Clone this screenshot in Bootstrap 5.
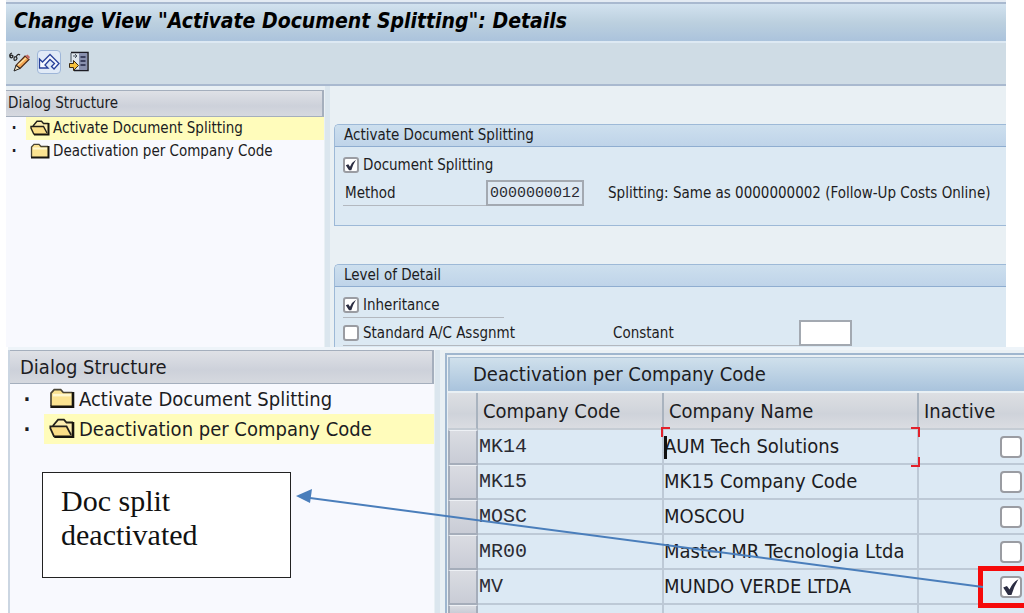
<!DOCTYPE html>
<html lang="en">
<head>
<meta charset="utf-8">
<meta name="viewport" content="width=device-width, initial-scale=1">
<title>Activate Document Splitting</title>
<link href="https://cdn.jsdelivr.net/npm/bootstrap@5.3.0/dist/css/bootstrap.min.css" rel="stylesheet">
<style>
  body { background: #fff; color: #1c1c22; font-family: "DejaVu Sans Condensed", "DejaVu Sans", sans-serif; font-size: 15px; line-height: 22px; }
  .screen-top { margin: 0 18px 0 6px; background: #e9f0f4; border-top: 2px solid #e4ebf3; }
  .title-bar { border-top: 2px solid #a9b9cf; border-bottom: 2px solid #dde9f3; background: linear-gradient(#d2e2ef, #bcd0df 50%, #abc3dc); padding: 0 8px; height: 41px; }
  .title-bar h1 { font-size: 21px; line-height: 34px; font-weight: 700; font-style: italic; color: #000; margin: 0; }
  .tool-bar { background: #cfdce5; border-bottom: 2px solid #a9b9cf; height: 43px; gap: 6px; padding: 0 0 4px 1px; }
  .tool-bar button { width: 24px; height: 24px; padding: 0; border: 1px solid transparent; border-radius: 4px; background: none; display: flex; align-items: center; justify-content: center; }
  .tool-bar button.picked { background: #e0eaf7; border-color: #9eb6d8; }
  .pane-tree { width: 318px; background: #f8f9fe; flex: none; border-top: 4px solid #e9f0f4; }
  .splitter { width: 5px; background: #dbe6ee; flex: none; margin-left: 1px; }
  .tree-head { border: 1px solid #a5afbd; border-right-width: 2px; border-left: 0; background: linear-gradient(#dfe1e6, #cdd1da 60%, #d6d9df); line-height: 25px; padding-left: 2px; margin: 0; font-size: 15px; font-weight: 400; }
  .tree-row { line-height: 23px; }
  .tree-row .dot { width: 20px; text-align: center; flex: none; padding-right: 4px; font-weight: 700; }
  .tree-row a { color: inherit; text-decoration: none; flex: 1; display: flex; align-items: center; gap: 3px; padding-left: 4px; white-space: nowrap; }
  .tree-row a.current { background: #fffcbb; }
  .details { padding: 38px 0 0 4px; min-width: 0; }
  .group-box { border: 1px solid #9db9d7; border-right: 0; border-top-left-radius: 5px; background: #dce9f3; }
  .group-box > h2 { font-size: 15px; font-weight: 400; line-height: 21px; margin: 0; padding-left: 9px; border-bottom: 1px solid #8fadd0; background: linear-gradient(#cddfee, #bfd4e9); border-top-left-radius: 4px; }
  .group-body { padding: 4px 0 0 8px; }
  .group-body.tall { padding-bottom: 18px; }
  .group-box + .group-box { margin-top: 38px; border-bottom: 0; }
  .field-row { height: 28px; white-space: nowrap; }
  .field-line { border-bottom: 1px solid #b3b8bf; height: 26px; line-height: 26px; }
  .w-method { width: 143px; padding-left: 2px; }
  .w-check { width: 161px; }
  .w-assign { width: 270px; }
  .w-const { width: 186px; }
  .tick { appearance: none; flex: none; width: 16px; height: 16px; margin: 0; border: 2px solid #9a9ca2; border-radius: 3px; background: #fff center / 100% no-repeat; }
  .tick:checked { background-image: url("data:image/svg+xml,%3Csvg xmlns='http://www.w3.org/2000/svg' viewBox='0 0 12 12'%3E%3Cpath d='M0.800 6.300 3.300 5.300 5 7.700Q7 3 11 0.800 8 5.500 6.300 11.300H4Z' fill='%232b2d42'/%3E%3C/svg%3E"); }
  .tick.big { width: 22px; height: 22px; border-radius: 4px; }
  .method-input { width: 98px; height: 26px; border: 2px solid #a3a9b1; background: #dde8f2; font: 15px "Liberation Mono", monospace; color: #2b2b33; padding: 0 2px; }
  .const-input { width: 53px; height: 26px; border: 2px solid #a3a9b1; background: #fff; }
  .screen-low { background: #e9f0f4; margin-left: 8px; font-size: 20px; border-top: 3px solid #eef4f9; }
  .low-tree { width: 426px; flex: none; background: #f8f9fe; border-left: 2px solid #cbd6e2; }
  .low-tree .tree-head { font-size: 20px; line-height: 32px; padding-left: 10px; }
  .low-tree .tree-row { line-height: 30px; }
  .low-tree .tree-row a { padding-left: 5px; gap: 4px; }
  .low-tree .tree-row .dot { width: 34px; padding-right: 0; }
  .note-box { width: 249px; height: 106px; margin: 28px 0 0 32px; padding: 11px 18px; border: 1px solid #222; background: #fff; font: 30px/34px "Liberation Serif", serif; color: #111; }
  .table-frame { border: 2px solid #9fb6ce; border-right: 0; border-bottom: 0; margin: 3px 0 0 5px; padding: 2px 0 0 1px; overflow: hidden; flex: 1; min-width: 0; }
  .table-frame h2 { font-size: 20px; font-weight: 400; line-height: 33px; margin: 0 0 2px; padding-left: 23px; border: 1px solid #a9bfd3; border-width: 1px 0 0 2px; background: linear-gradient(#cfe0ec, #a9c3dc); }
  .codes { width: 100%; table-layout: fixed; border-collapse: separate; border-spacing: 0; white-space: nowrap; }
  .codes th { font-weight: 400; height: 37px; padding: 0 0 0 5px; background: linear-gradient(#dddfe3, #cfd3da 60%, #dadce1); border-right: 2px solid #a9b3bf; border-bottom: 2px solid #c5ccd4; }
  .codes td { height: 35px; padding: 0; background: #dce9f4; border-right: 2px solid #bdc9d6; border-bottom: 2px solid #bdc9d6; position: relative; }
  .codes th:last-child, .codes td:last-child { border-right: 0; }
  .codes td:first-child { background: linear-gradient(#dadce2, #c9ccd6); border: 2px solid #a5adba; border-top: 1px solid #eef1f5; }
  .codes td:last-child { padding-left: 81px; }
  .codes td .tick { display: block; }
  .codes td.code { font: 20px/33px "Liberation Mono", monospace; color: #2b2b33; padding-left: 1px; }
  .codes td.name { line-height: 33px; }
  .codes td.focused { z-index: 1; }
  .codes tr.rest td { height: 8px; border-bottom: 0; }
  .edge { position: absolute; width: 9px; height: 10px; border: 0 solid #e3212b; }
  .edge.tl { left: -3px; top: -3px; border-width: 2px 0 0 2px; }
  .edge.tr { right: -3px; top: -3px; border-width: 2px 2px 0 0; }
  .edge.br { right: -3px; bottom: -4px; border-width: 0 2px 2px 0; }
  .caret { position: absolute; left: 0; top: 6px; width: 3px; height: 23px; background: #111; }
  .red-frame { position: absolute; left: 59px; right: -6px; top: -4px; bottom: -5px; border: 5px solid #f60a0a; pointer-events: none; }
  .codes td.flagged { z-index: 1; }
  .arrow-line { position: absolute; left: 302px; top: 147px; height: 91px; width: calc(100% - 343px); pointer-events: none; z-index: 2; }
  .arrow-tip { position: absolute; left: 288px; top: 139px; pointer-events: none; }
</style>
</head>
<body>
<svg class="d-none" aria-hidden="true">
  <symbol id="folder-closed" viewBox="0 0 20 17"><path d="M1.500 14.500V4L4 1.300h5L11 3.500h7.500v11z" fill="#fbe391"/><path d="M3 5.500h14" stroke="#fff8cf" stroke-width="2"/><path d="M1.500 14V4L4 1.300h5L11 3.500h7" fill="none" stroke="#4a4536" stroke-width="1.300"/><path d="M18.500 3v11.500H1" fill="none" stroke="#17150f" stroke-width="2"/></symbol>
  <symbol id="folder-open" viewBox="0 0 20 17"><path d="M4.500 6L7 1.300h4.500L13.500 3.500h5v11H5z" fill="#fdeeb0"/><path d="M1 6.500h12.500l3.500 8H4z" fill="#fbdf88"/><path d="M3 6L7 1.300h4.500L13.500 3.500h5M4 14.500L1 8V6.500h12.500l3.500 6.500" fill="none" stroke="#23201a" stroke-width="1.400"/><path d="M18.500 3v11.500H4" fill="none" stroke="#17150f" stroke-width="2"/></symbol>
</svg>

<main class="overflow-hidden">
<section class="screen-top">
  <header class="title-bar d-flex align-items-start"><h1>Change View "Activate Document Splitting": Details</h1></header>
  <div class="tool-bar d-flex align-items-center" role="toolbar">
    <button type="button" aria-label="Display or change">
      <svg width="22" height="22" viewBox="0 0 22 22"><path d="M4 2Q1 3 2 6q2 2 3-1Q3 3 2 6M6 8q0-3 2-2t0 3q-2 1-2-1M8 6q2-4 4-2" fill="none" stroke="#222" stroke-width="1.200"/><path d="M17 5l4 3.500-9 9-4-3z" fill="#f3a552" stroke="#4a2a18" stroke-width="1.200"/><path d="M8 14.500l4 3-6 2.500z" fill="#f6e3c0" stroke="#222"/><path d="M17.500 5l2-1.500L22 6l-1.500 2.500z" fill="#c46a62"/><path d="M10 14l8-7" stroke="#fde1a0" stroke-width="1.500"/></svg>
    </button>
    <button type="button" class="picked" aria-label="Undo">
      <svg width="22" height="20" viewBox="0 0 22 20"><path d="M1.500 7v9h8.500l-3-3L12 7.500l4.500 4-3 3 2.500 2.500 5-5.500L12 2.500 4.500 10z" fill="#f5f8ff" stroke="#27409a" stroke-width="1.300"/></svg>
    </button>
    <button type="button" aria-label="Select block">
      <svg width="22" height="22" viewBox="0 0 22 22"><path d="M3 1.500h17v18H6" fill="#dfe7ee" stroke="#1c1c24" stroke-width="1.500"/><path d="M11 2h8v17h-8z" fill="#8890ae"/><path d="M12.500 6h5M12.500 10h5M12.500 14h5" stroke="#202544" stroke-width="1.500"/><path d="M3 2v9M5 5h4M7 3l2 2-2 2" stroke="#48525e" fill="none"/><path d="M1.500 12.500h4v-3l5 5-5 5v-3h-4z" fill="#f8c23c" stroke="#3c2a10"/></svg>
    </button>
  </div>
  <div class="d-flex">
    <nav class="pane-tree">
      <h2 class="tree-head">Dialog Structure</h2>
      <div class="tree-row d-flex"><span class="dot">·</span><a class="current" href="#activate"><svg width="20" height="17"><use href="#folder-open"/></svg>Activate Document Splitting</a></div>
      <div class="tree-row d-flex"><span class="dot">·</span><a href="#deactivation"><svg width="20" height="17"><use href="#folder-closed"/></svg>Deactivation per Company Code</a></div>
    </nav>
    <div class="splitter"></div>
    <div class="details flex-grow-1">
      <section class="group-box" id="activate">
        <h2>Activate Document Splitting</h2>
        <div class="group-body tall">
          <div class="field-row d-flex align-items-center">
            <label class="d-flex align-items-center gap-1"><input class="tick" type="checkbox" checked>Document Splitting</label>
          </div>
          <div class="field-row d-flex align-items-center">
            <label class="field-line w-method" for="method">Method</label>
            <input id="method" class="method-input" type="text" value="0000000012" readonly>
            <span class="ps-4">Splitting: Same as 0000000002 (Follow-Up Costs Online)</span>
          </div>
        </div>
      </section>
      <section class="group-box" id="detail">
        <h2>Level of Detail</h2>
        <div class="group-body">
          <div class="field-row d-flex align-items-center">
            <label class="field-line w-check d-flex align-items-center gap-1"><input class="tick" type="checkbox" checked>Inheritance</label>
          </div>
          <div class="field-row d-flex align-items-center">
            <label class="field-line w-assign d-flex align-items-center gap-1"><input class="tick" type="checkbox">Standard A/C Assgnmt</label>
            <label class="field-line w-const" for="constant">Constant</label>
            <input id="constant" class="const-input" type="text">
          </div>
        </div>
      </section>
    </div>
  </div>
</section>

<section class="screen-low position-relative d-flex">
  <nav class="low-tree">
    <h2 class="tree-head">Dialog Structure</h2>
    <div class="tree-row d-flex"><span class="dot">·</span><a href="#activate"><svg width="26" height="22"><use href="#folder-closed"/></svg>Activate Document Splitting</a></div>
    <div class="tree-row d-flex"><span class="dot">·</span><a class="current" href="#deactivation"><svg width="26" height="22"><use href="#folder-open"/></svg>Deactivation per Company Code</a></div>
    <p class="note-box">Doc split<br>deactivated</p>
  </nav>
  <div class="splitter"></div>
  <div class="table-frame" id="deactivation">
    <h2>Deactivation per Company Code</h2>
    <table class="codes">
      <colgroup><col style="width:30px"><col style="width:186px"><col style="width:255px"><col></colgroup>
      <thead><tr><th></th><th>Company Code</th><th>Company Name</th><th>Inactive</th></tr></thead>
      <tbody>
        <tr><td></td><td class="code">MK14</td><td class="name focused">AUM Tech Solutions<span class="caret"></span><span class="edge tl"></span><span class="edge tr"></span><span class="edge br"></span></td><td><input class="tick big" type="checkbox" aria-label="MK14 inactive"></td></tr>
        <tr><td></td><td class="code">MK15</td><td class="name">MK15 Company Code</td><td><input class="tick big" type="checkbox" aria-label="MK15 inactive"></td></tr>
        <tr><td></td><td class="code">MOSC</td><td class="name">MOSCOU</td><td><input class="tick big" type="checkbox" aria-label="MOSC inactive"></td></tr>
        <tr><td></td><td class="code">MR00</td><td class="name">Master MR Tecnologia Ltda</td><td><input class="tick big" type="checkbox" aria-label="MR00 inactive"></td></tr>
        <tr><td></td><td class="code">MV</td><td class="name">MUNDO VERDE LTDA</td><td class="flagged"><input class="tick big" type="checkbox" aria-label="MV inactive" checked><span class="red-frame"></span></td></tr>
        <tr class="rest"><td></td><td></td><td></td><td></td></tr>
      </tbody>
    </table>
  </div>
  <svg class="arrow-line" viewBox="0 0 100 90" preserveAspectRatio="none" aria-hidden="true"><path d="M0 1L100 89" stroke="#4a7ebb" stroke-width="2" vector-effect="non-scaling-stroke"/></svg>
  <svg class="arrow-tip" width="17" height="15" aria-hidden="true"><path d="M0 7L16 0 14 14z" fill="#4a7ebb"/></svg>
</section>
</main>
<script src="https://cdn.jsdelivr.net/npm/bootstrap@5.3.0/dist/js/bootstrap.bundle.min.js"></script>
</body>
</html>
